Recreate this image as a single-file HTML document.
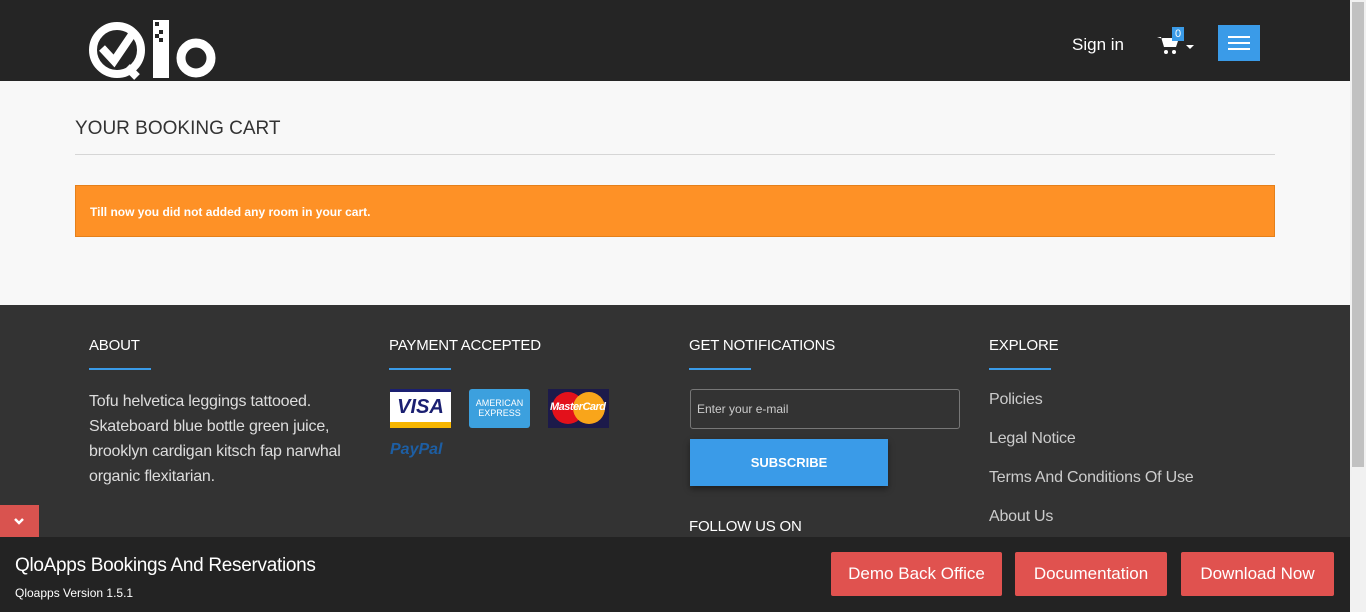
<!DOCTYPE html>
<html><head><meta charset="utf-8"><style>
*{margin:0;padding:0;box-sizing:border-box}
body{width:1366px;height:612px;overflow:hidden;font-family:"Liberation Sans",sans-serif;background:#f8f8f8;position:relative}
.abs{position:absolute}
.hdr{left:0;top:0;width:1350px;height:81px;background:#252525}
.sb{left:1350px;top:0;width:16px;height:612px;background:#f1f1f1}
.thumb{left:1352px;top:2px;width:12px;height:465px;background:#c1c1c1}
.ft{left:0;top:305px;width:1350px;height:232px;background:#333}
.bb{left:0;top:537px;width:1350px;height:75px;background:#232323}
.h4{color:#fff;font-size:15px;top:337px;letter-spacing:-.2px}
.ul{top:368px;width:62px;height:2px;background:#3a9be8}
.ft p{color:#ddd;font-size:16px;line-height:25px;letter-spacing:-.2px}
.lnk{color:#ccc;font-size:16px;left:989px;letter-spacing:-.2px}
.btn{top:552px;height:44px;background:#e0524f;color:#fff;font-size:17px;line-height:44px;text-align:center;border-radius:2px}
</style></head><body>
<div class="abs hdr"></div>
<svg class="abs" style="left:88px;top:18px" width="130" height="62" viewBox="0 0 130 62">
<circle cx="29" cy="32" r="24" fill="none" stroke="#fff" stroke-width="8"/>
<path d="M14 30 L26 43 L47 12" fill="none" stroke="#fff" stroke-width="8"/>
<path d="M39 49 L49 59" stroke="#fff" stroke-width="8"/>
<rect x="65" y="2" width="16" height="58" fill="#fff"/>
<rect x="67" y="4" width="4" height="4" fill="#252525"/><rect x="71" y="12" width="4" height="4" fill="#252525"/><rect x="67" y="16" width="4" height="4" fill="#252525"/><rect x="71" y="20" width="4" height="4" fill="#252525"/>
<circle cx="108" cy="40" r="15" fill="none" stroke="#fff" stroke-width="9"/>
</svg>
<div class="abs" style="left:1072px;top:35px;color:#fff;font-size:17px">Sign in</div>
<svg class="abs" style="left:1157px;top:35px" width="24" height="20" viewBox="0 0 24 20"><path d="M0 2h4l3 10h11l3-8H6" fill="#fff"/><path d="M5 3h17l-3 9H8z" fill="#fff"/><circle cx="9" cy="17" r="2" fill="#fff"/><circle cx="17" cy="17" r="2" fill="#fff"/></svg>
<div class="abs" style="left:1172px;top:27px;width:12px;height:14px;background:#3a9be8;color:#fff;font-size:11px;text-align:center;line-height:14px">0</div>
<div class="abs" style="left:1186px;top:45px;border:4px solid transparent;border-top:4px solid #fff"></div>
<div class="abs" style="left:1218px;top:25px;width:42px;height:36px;background:#3a9be8"></div>
<div class="abs" style="left:1228px;top:36px;width:22px;height:2px;background:#fff;box-shadow:0 6px #fff,0 12px #fff"></div>
<div class="abs" style="left:75px;top:118px;font-size:19px;color:#333">YOUR BOOKING CART</div>
<div class="abs" style="left:75px;top:154px;width:1200px;height:1px;background:#d6d6d6"></div>
<div class="abs" style="left:75px;top:185px;width:1200px;height:52px;background:#fe9126;border:1px solid #e5801a;color:#fff;font-size:12px;font-weight:bold;padding:19px 14px">Till now you did not added any room in your cart.</div>
<div class="abs ft"></div>
<div class="abs h4" style="left:89px">ABOUT</div><div class="abs ul" style="left:89px"></div>
<div class="abs h4" style="left:389px">PAYMENT ACCEPTED</div><div class="abs ul" style="left:389px"></div>
<div class="abs h4" style="left:689px">GET NOTIFICATIONS</div><div class="abs ul" style="left:689px"></div>
<div class="abs h4" style="left:989px">EXPLORE</div><div class="abs ul" style="left:989px"></div>
<div class="abs ft" style="background:none;top:389px;left:89px;width:280px;height:auto"><p>Tofu helvetica leggings tattooed. Skateboard blue bottle green juice, brooklyn cardigan kitsch fap narwhal organic flexitarian.</p></div>
<div class="abs" style="left:390px;top:389px;width:61px;height:39px;background:#fff;border-top:3px solid #1a1f71;border-bottom:6px solid #f7b600;color:#1a1f71;font-weight:bold;font-style:italic;font-size:20px;text-align:center;line-height:30px">VISA</div>
<div class="abs" style="left:469px;top:389px;width:61px;height:39px;background:#3ca0de;border-radius:3px;color:#fff;font-size:9px;text-align:center;padding-top:9px;line-height:10px">AMERICAN<br>EXPRESS</div>
<div class="abs" style="left:548px;top:389px;width:61px;height:39px;background:#1c1a4a"><div class="abs" style="left:4px;top:3px;width:32px;height:32px;border-radius:50%;background:#e3111b"></div><div class="abs" style="left:25px;top:3px;width:32px;height:32px;border-radius:50%;background:#f9a51a"></div><div class="abs" style="left:2px;top:12px;color:#fff;font-size:11px;font-weight:bold;font-style:italic;letter-spacing:-.5px">MasterCard</div></div>
<div class="abs" style="left:390px;top:441px;color:#1d5ea3;font-size:16px;font-weight:bold;font-style:italic">PayPal</div>
<div class="abs" style="left:690px;top:389px;width:270px;height:40px;border:1px solid #777;border-radius:3px;color:#ccc;font-size:12px;padding:12px 6px">Enter your e-mail</div>
<div class="abs" style="left:690px;top:439px;width:198px;height:47px;background:#3a9be8;color:#fff;font-size:13px;font-weight:bold;text-align:center;line-height:47px;box-shadow:0 3px 6px rgba(0,0,0,.4)">SUBSCRIBE</div>
<div class="abs h4" style="left:689px;top:518px">FOLLOW US ON</div>
<div class="abs lnk" style="top:391px">Policies</div>
<div class="abs lnk" style="top:430px">Legal Notice</div>
<div class="abs lnk" style="top:469px">Terms And Conditions Of Use</div>
<div class="abs lnk" style="top:508px">About Us</div>
<div class="abs" style="left:0;top:505px;width:39px;height:33px;background:#d9534f"></div>
<svg class="abs" style="left:13px;top:517px" width="12" height="9"><path d="M2 2l4 4 4-4" fill="none" stroke="#fff" stroke-width="2.5"/></svg>
<div class="abs bb"></div>
<div class="abs" style="left:15px;top:555px;color:#fff;font-size:19px;letter-spacing:-.3px">QloApps Bookings And Reservations</div>
<div class="abs" style="left:15px;top:586px;color:#fff;font-size:12px">Qloapps Version 1.5.1</div>
<div class="abs btn" style="left:831px;width:171px">Demo Back Office</div>
<div class="abs btn" style="left:1015px;width:152px">Documentation</div>
<div class="abs btn" style="left:1181px;width:153px">Download Now</div>
<div class="abs sb"></div><div class="abs thumb"></div>
</body></html>
